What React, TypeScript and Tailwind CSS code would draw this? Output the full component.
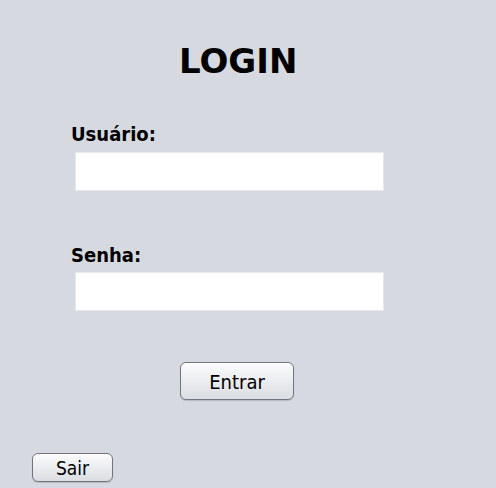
import React from "react";

const font = { fontFamily: '"DejaVu Sans Condensed", "DejaVu Sans", sans-serif' };

export default function App() {
  return (
    <div
      className="w-[496px] h-[488px] bg-[#d6d9df] flex flex-col text-black overflow-hidden [font-stretch:condensed]"
      style={font}
    >
      <h1 className="mt-[44px] ml-[179px] text-[34px] font-bold leading-none [font-stretch:normal] [font-family:'DejaVu_Sans',sans-serif]">
        LOGIN
      </h1>

      <label className="mt-[46px] ml-[71px] text-[20px] font-bold leading-none">
        Usuário:
      </label>
      <input
        type="text"
        className="mt-[8px] ml-[75px] w-[309px] h-[39px] bg-white border border-[#e6e8ec] outline-none px-2"
      />

      <label className="mt-[54px] ml-[71px] text-[20px] font-bold leading-none">
        Senha:
      </label>
      <input
        type="password"
        className="mt-[7px] ml-[75px] w-[309px] h-[39px] bg-white border border-[#e6e8ec] outline-none px-2"
      />

      {/* Botão principal */}
      <button className="mt-[51px] ml-[180px] w-[114px] h-[38px] rounded-[6px] border border-[#72767c] bg-gradient-to-b from-[#fcfcfd] to-[#dadde2] shadow-[inset_0_1px_0_#ffffff,0_1px_1px_rgba(0,0,0,0.15)] text-[20px] leading-none flex items-center justify-center pt-[2px] [font-stretch:condensed]">
        Entrar
      </button>

      <button className="mt-[53px] ml-[32px] w-[81px] h-[29px] rounded-[6px] border border-[#72767c] bg-gradient-to-b from-[#fcfcfd] to-[#dadde2] shadow-[inset_0_1px_0_#ffffff,0_1px_1px_rgba(0,0,0,0.15)] text-[19px] leading-none flex items-center justify-center pt-[2px] [font-stretch:condensed]">
        Sair
      </button>
    </div>
  );
}
